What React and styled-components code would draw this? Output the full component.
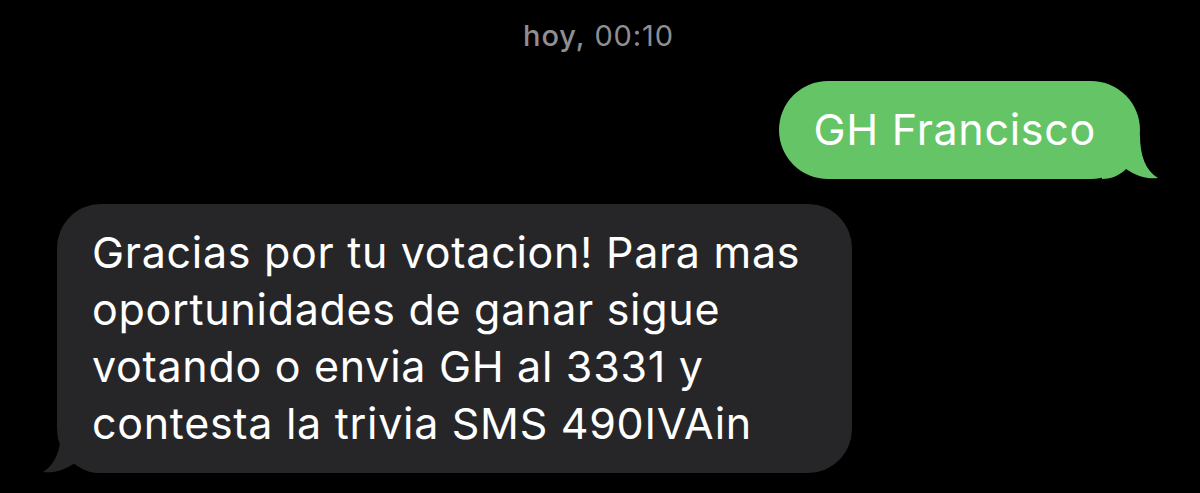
import React from 'react'
import styled, { createGlobalStyle } from 'styled-components'

const Global = createGlobalStyle`
  html, body {
    margin: 0;
    padding: 0;
    background: #000;
  }
  body {
    font-family: Inter, "Noto Sans", "Liberation Sans", sans-serif;
    -webkit-font-smoothing: antialiased;
  }
`

const Thread = styled.div`
  width: 1200px;
  height: 493px;
  box-sizing: border-box;
  padding: 18px 60px 0 57px;
  display: flex;
  flex-direction: column;
  overflow: hidden;
`

const Stamp = styled.div`
  text-align: center;
  color: #8e8e93;
  font-size: 29px;
  line-height: 36px;
  letter-spacing: 0.9px;

  b {
    font-weight: 500;
  }
`

const Row = styled.div`
  display: flex;
  justify-content: ${p => (p.$out ? 'flex-end' : 'flex-start')};
  margin-top: ${p => p.$gap}px;
`

const Bubble = styled.div`
  position: relative;
  z-index: 0;
  box-sizing: border-box;
  max-width: 795px;
  background: ${p => (p.$out ? '#65c466' : '#262628')};
  color: #fff;
  font-size: 43px;
  line-height: 57px;
  letter-spacing: 0.7px;
  padding: ${p => (p.$out ? '20px 44px 21px 35px' : '20px 46px 21px 35px')};
  border-radius: ${p => (p.$out ? '49px' : '44px')};
`

const Tail = styled.svg`
  position: absolute;
  z-index: -1;
  bottom: 0;
  width: 56px;
  height: 44px;
  ${p => (p.$out ? 'right: -18px;' : 'left: -14px; transform: scaleX(-1);')}
`

function BubbleTail({ out, color }) {
  return (
    <Tail $out={out} viewBox="0 0 56 44">
      <path
        d="M0 0 H38 C38 20 43 35 56 43 C46 44.5 34 41 24 34 C18 40 10 44 0 44 Z"
        fill={color}
      />
    </Tail>
  )
}

export default function App() {
  return (
    <>
      <Global />
      <Thread>
        <Stamp>
          <b>hoy,</b> 00:10
        </Stamp>
        <Row $out $gap={27}>
          <Bubble $out>
            GH Francisco
            <BubbleTail out color="#65c466" />
          </Bubble>
        </Row>
        <Row $gap={25}>
          <Bubble>
            Gracias por tu votacion! Para mas oportunidades de ganar sigue
            votando o envia GH al 3331 y contesta la trivia SMS 490IVAin
            <BubbleTail color="#262628" />
          </Bubble>
        </Row>
      </Thread>
    </>
  )
}
